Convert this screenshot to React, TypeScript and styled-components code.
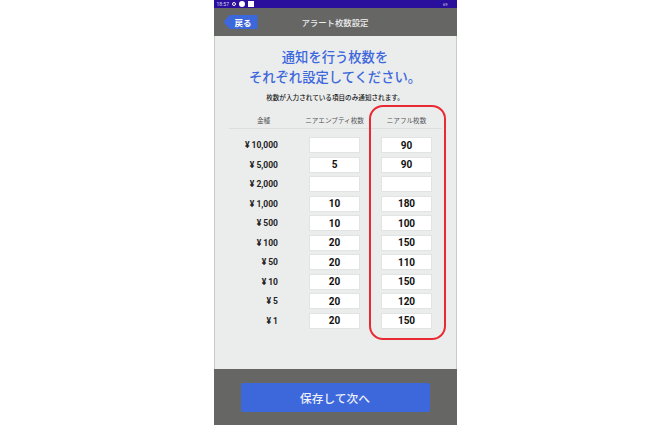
import styled, { createGlobalStyle } from "styled-components";

const rows = [
  { label: "10,000", empty: "", full: "90" },
  { label: "5,000", empty: "5", full: "90" },
  { label: "2,000", empty: "", full: "" },
  { label: "1,000", empty: "10", full: "180" },
  { label: "500", empty: "10", full: "100" },
  { label: "100", empty: "20", full: "150" },
  { label: "50", empty: "20", full: "110" },
  { label: "10", empty: "20", full: "150" },
  { label: "5", empty: "20", full: "120" },
  { label: "1", empty: "20", full: "150" },
];

export default function App() {
  return (
    <Page>
      <GlobalStyle />
      <Phone>
        <StatusBar>
          <StatusLeft>
            <span>18:57</span>
            <GearDot />
            <RoundDot />
            <SquareDot />
          </StatusLeft>
          <StatusRight>69</StatusRight>
        </StatusBar>
        <Header>
          <BackButton>戻る</BackButton>
          <HeaderTitle>アラート枚数設定</HeaderTitle>
        </Header>
        <Body>
          <Heading>
            通知を行う枚数を
            <br />
            それぞれ設定してください。
          </Heading>
          <Note>枚数が入力されている項目のみ通知されます。</Note>
          <TableHead>
            <HeadCell>金種</HeadCell>
            <HeadCell>ニアエンプティ枚数</HeadCell>
            <HeadCell>ニアフル枚数</HeadCell>
          </TableHead>
          <Rows>
            {rows.map((row) => (
              <Row key={row.label}>
                <Denomination>
                  <Yen>¥</Yen>
                  {row.label}
                </Denomination>
                <ValueBox>{row.empty}</ValueBox>
                <ValueBox>{row.full}</ValueBox>
              </Row>
            ))}
          </Rows>
          <Highlight />
        </Body>
        <Footer>
          <SaveButton>保存して次へ</SaveButton>
        </Footer>
      </Phone>
    </Page>
  );
}

const GlobalStyle = createGlobalStyle`
  html, body {
    margin: 0;
    padding: 0;
    background: #ffffff;
    font-family: "Roboto", "Noto Sans CJK JP", sans-serif;
  }
`;

const Page = styled.div`
  width: 670px;
  height: 426px;
  display: flex;
  justify-content: center;
  overflow: hidden;
`;

const Phone = styled.div`
  width: 243px;
  height: 426px;
  display: flex;
  flex-direction: column;
`;

const StatusBar = styled.div`
  height: 8px;
  background: #2a0f9c;
  color: #d9d6ee;
  font-size: 5px;
  display: flex;
  align-items: center;
  justify-content: space-between;
  padding: 0 9px 0 3px;
`;

const StatusLeft = styled.div`
  display: flex;
  align-items: center;
  gap: 3px;
`;

const StatusRight = styled.span`
  font-size: 4px;
`;

const GearDot = styled.i`
  width: 4px;
  height: 4px;
  border-radius: 50%;
  border: 1px solid #fff;
  box-sizing: border-box;
`;

const RoundDot = styled.i`
  width: 6px;
  height: 6px;
  border-radius: 50%;
  background: #fff;
`;

const SquareDot = styled.i`
  width: 6px;
  height: 6px;
  background: #fff;
`;

const Header = styled.div`
  height: 28px;
  background: #666764;
  display: flex;
  align-items: center;
  justify-content: center;
  position: relative;
`;

const BackButton = styled.div`
  position: absolute;
  left: 10px;
  top: 7px;
  width: 34px;
  height: 14px;
  background: #3d68dc;
  color: #fff;
  font-size: 8.5px;
  font-weight: 700;
  display: flex;
  align-items: center;
  justify-content: center;
  padding-left: 5px;
  box-sizing: border-box;
  clip-path: polygon(6px 0, 100% 0, 100% 100%, 6px 100%, 0 50%);
`;

const HeaderTitle = styled.div`
  color: #eceded;
  font-size: 8.4px;
  font-weight: 500;
`;

const Body = styled.div`
  height: 333px;
  background: #ebeded;
  border-left: 1px solid #c9cbcb;
  border-right: 1px solid #c9cbcb;
  box-sizing: border-box;
  position: relative;
  display: flex;
  flex-direction: column;
`;

const Heading = styled.h1`
  margin: 12px 0 0;
  color: #3d68dc;
  font-size: 13.3px;
  font-weight: 500;
  line-height: 20px;
  text-align: center;
`;

const Note = styled.p`
  margin: 5px 0 0;
  color: #222;
  font-size: 6.6px;
  font-weight: 500;
  line-height: 10px;
  text-align: center;
`;

const TableHead = styled.div`
  display: grid;
  grid-template-columns: 70px 72px 72px;
  margin: 13px 14px 0;
  padding-bottom: 2px;
  border-bottom: 1px solid #dcdede;
`;

const HeadCell = styled.div`
  color: #555;
  font-size: 6.6px;
  line-height: 10px;
  text-align: center;
`;

const Rows = styled.div`
  display: flex;
  flex-direction: column;
  gap: 3.56px;
  margin-top: 8px;
`;

const Row = styled.div`
  display: grid;
  grid-template-columns: 73.5px 51px 51px;
  column-gap: 21px;
  align-items: center;
`;

const Denomination = styled.div`
  color: #222;
  font-size: 8.5px;
  font-weight: 700;
  text-align: right;
  padding-right: 10px;
`;

const Yen = styled.span`
  margin-right: 2px;
`;

const ValueBox = styled.div`
  height: 16px;
  background: #fff;
  border: 1px solid #e2e4e4;
  box-sizing: border-box;
  color: #111;
  font-size: 10px;
  font-weight: 700;
  display: flex;
  align-items: center;
  justify-content: center;
`;

const Highlight = styled.div`
  position: absolute;
  left: 154px;
  top: 69px;
  width: 77px;
  height: 235px;
  border: 2px solid #ea2a33;
  border-radius: 14px;
  box-sizing: border-box;
  pointer-events: none;
`;

const Footer = styled.div`
  height: 56px;
  background: #666764;
  display: flex;
  justify-content: center;
  padding-top: 14px;
  box-sizing: border-box;
`;

const SaveButton = styled.div`
  width: 189px;
  height: 29px;
  background: #3d68dc;
  border-radius: 2px;
  color: #eef1fb;
  font-size: 11.7px;
  font-weight: 500;
  display: flex;
  align-items: center;
  justify-content: center;
`;
